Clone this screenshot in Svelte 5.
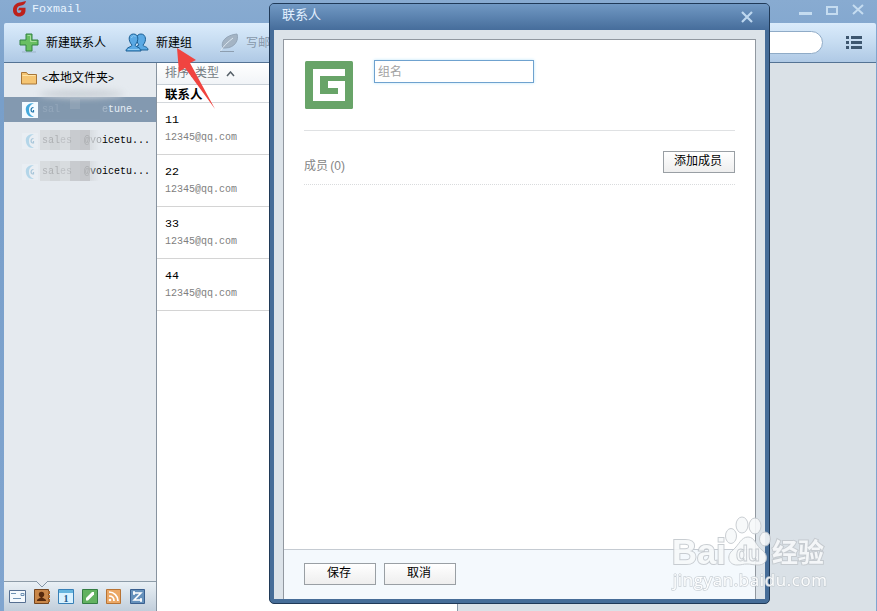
<script lang="ts">
	const accounts = [
		{ start: 'sal', mid: '       e', end: 'tune...', selected: true },
		{ start: 'sal', mid: 'es  @vo', end: 'icetu...', selected: false },
		{ start: 'sal', mid: 'es  @', end: 'voicetu...', selected: false }
	];

	const contacts = ['11', '22', '33', '44'].map((name) => ({ name, email: '12345@qq.com' }));

	let groupName = $state('');
	const members: string[] = [];
</script>

<div class="window">
	<header class="titlebar">
		<svg class="logo" width="15" height="16" viewBox="0 0 15 16">
			<path d="M14 0 9 1.200C4 1.800 1 4.600 1 9c0 4 2.600 6.500 6 6.500 4 0 6.500-2.600 6.500-6V6.800H7.200L6 9.200h3.400c-.2 1.800-1 2.800-2.400 2.800-1.500 0-2.200-1.200-2.200-3 0-3 1.600-4.400 4.500-4.600C12 4.200 13.400 2.500 14 0z" fill="#bd211b" />
		</svg>
		<span class="app-name">Foxmail</span>
		<svg class="controls" width="68" height="14" viewBox="0 0 68 14" fill="none" stroke="#c5dcf0">
			<path d="M0 10.500h13" stroke-width="3" />
			<path d="M28 4h10v7H28z" stroke-width="2" />
			<path d="M54 2l10 9M64 2l-10 9" stroke-width="2" />
		</svg>
	</header>

	<div class="toolbar">
		<svg class="plus" width="20" height="20" viewBox="0 0 20 20">
			<path d="M3 19h14" stroke="#8095a8" opacity=".5" />
			<path d="M7 1h6v6h6v5h-6v6H7v-6H1V7h6z" fill="#69bf62" stroke="#328342" />
			<path d="M8.500 2.500h3v6h6" fill="none" stroke="#a6dd9d" />
		</svg>
		<span class="tool new-contact">新建联系人</span>
		<svg class="people" width="24" height="19" viewBox="0 0 24 19" fill="#5aa9e4" stroke="#1c6095">
			<path d="M12 17v-4l2-1c-4-5-3-11 2-11s6 7 2 11c0 2 5 1 5 5z" />
			<path d="M1 18c0-4 6-4 6-6C3 8 3 1 8.500 1S14 8 10 12c0 2 6 2 6 6z" />
			<path d="M6.500 5c1-3 3-3 4-1M3 16.500h11" fill="none" stroke="#91cdf4" />
		</svg>
		<span class="tool new-group">新建组</span>
		<svg class="feather" width="20" height="20" viewBox="0 0 20 20">
			<path d="M4 15C1 9 7 2 18 1c2 6-2 14-12 14z" fill="#a4b4c4" stroke="#93a5b8" />
			<path d="M1 19c3-6 8-10 13-14" stroke="#dce7f0" fill="none" />
			<path d="M1 18.500h14" stroke="#8d9eb0" />
		</svg>
		<span class="tool disabled">写邮件</span>
		<div class="search"></div>
		<svg class="menu" width="16" height="13" viewBox="0 0 16 13" fill="#3d566f">
			<path d="M0 0h3v3H0zM5 0h11v3H5zM0 5h3v3H0zM5 5h11v3H5zM0 10h3v3H0zM5 10h11v3H5z" />
		</svg>
	</div>

	<div class="body">
		<aside class="sidebar">
			<div class="folder">
				<svg width="16" height="14" viewBox="0 0 16 14">
					<path d="M.5 13V1.500h5l1.500 2h8.500V13z" fill="#f5c573" stroke="#a87638" />
					<path d="M1.500 4.500h13" stroke="#ffe5a9" />
				</svg>
				<span><i>&lt;</i>本地文件夹<i>&gt;</i></span>
			</div>
			<div class="accounts">
				{#each accounts as account}
					<div class="account" class:selected={account.selected}>
						<svg width="16" height="16" viewBox="0 0 16 16">
							<path d="M0 0h16v16H0z" fill="#f3faff" />
							<path d="M12 1C6 1 3 4 4 9s4 6 8 6C8 13 7 11 7 8s1-5 5-7z" fill="#45a9dc" />
							<path d="M11.500 5.500C8 6 8.500 10 11.500 10V8" fill="none" stroke="#2679ad" stroke-width="1.200" />
						</svg>
						<span class="address"><span class="faint">{account.start}</span><span class="masked">{account.mid}</span>{account.end}</span>
						<div class="mosaic"><b></b><b></b><b></b><b></b><b></b><b></b></div>
					</div>
				{/each}
				<div class="smudge"></div>
			</div>
			<nav class="modules">
				<svg class="notch" width="14" height="7" viewBox="0 0 14 7">
					<path d="M1 0l6 6 6-6" fill="#e5eaef" stroke="#8496a6" />
				</svg>
				<svg width="17" height="16" viewBox="0 0 17 16" fill="none" stroke="#566f91">
					<path d="M.5 1.500h16v12H.5z" fill="#f5f9fd" />
					<path d="M2 4.500h5M12 4.500h3v2h-3zM4 9.500h8" stroke="#6e91b3" />
				</svg>
				<svg width="16" height="16" viewBox="0 0 16 16">
					<path d="M.5.5h14v14H.5z" fill="#c98749" stroke="#744620" />
					<path d="M15 2v12" stroke="#a9682e" stroke-width="2" stroke-dasharray="3 1" />
					<circle cx="7.500" cy="5.500" r="2.700" fill="#55290d" />
					<path d="M3 12c0-3 3-2 4-4h1c1 2 4 1 4 4z" fill="#55290d" />
				</svg>
				<svg width="16" height="16" viewBox="0 0 16 16">
					<path d="M.5.5h15v14H.5z" fill="#d9f2ff" stroke="#3780b7" />
					<path d="M1 1h14v3H1z" fill="#65b5de" />
					<text x="5.500" y="12.500">1</text>
				</svg>
				<svg width="16" height="16" viewBox="0 0 16 16">
					<path d="M.5.5h15v14H.5z" fill="#62b260" stroke="#347d42" />
					<path d="M4 11.500V9l6-6h2v2.500l-6 6z" fill="#fff" />
				</svg>
				<svg width="16" height="16" viewBox="0 0 16 16">
					<path d="M.5.5h14v14H.5z" fill="#eba866" stroke="#b87333" />
					<path d="M3 7c3 0 5 2 5 5M3 3c5 0 9 4 9 9" fill="none" stroke="#fff" stroke-width="1.700" />
					<circle cx="4" cy="11" r="1.300" fill="#fff" />
				</svg>
				<svg width="16" height="16" viewBox="0 0 16 16">
					<path d="M.5.5h14v14H.5z" fill="#6591bc" stroke="#395f8f" />
					<path d="M3 4h8l-7 7h8M4 2v4M11 9v4" fill="none" stroke="#fff" stroke-width="1.500" />
				</svg>
			</nav>
		</aside>

		<section class="list">
			<div class="sort">
				<span>排序<i>:</i>类型</span>
				<svg width="9" height="6" viewBox="0 0 9 6"><path d="M1 5l3.500-4L8 5" fill="none" stroke="#566068" stroke-width="1.500" /></svg>
			</div>
			<div class="group">联系人</div>
			{#each contacts as contact}
				<div class="contact">
					<div class="name">{contact.name}</div>
					<div class="email">{contact.email}</div>
				</div>
			{/each}
		</section>
		<section class="detail"></section>
	</div>

	<div class="dialog">
		<div class="dialog-title">
			<span>联系人</span>
			<svg width="12" height="12" viewBox="0 0 12 12"><path d="M1 1l10 10M11 1L1 11" stroke="#bdd7ef" stroke-width="2.200" /></svg>
		</div>
		<div class="dialog-body">
			<div class="panel">
				<div class="content">
					<div class="group-head">
						<svg width="48" height="48" viewBox="0 0 48 48">
							<rect width="48" height="48" rx="1.500" fill="#68a468" />
							<path d="M8 8h32v7H15v18h18v-6H23v-7h17v20H8z" fill="#fff" />
						</svg>
						<input type="text" placeholder="组名" bind:value={groupName} />
					</div>
					<div class="members">
						<span>成员 <i>({members.length})</i></span>
						<button>添加成员</button>
					</div>
				</div>
				<div class="actions">
					<button>保存</button>
					<button>取消</button>
				</div>
			</div>
		</div>
	</div>

	<svg class="pointer" width="42" height="64" viewBox="0 0 42 64">
		<path d="M2 1l19 12-6 3 25 46L10 21l-6 4z" fill="#f04440" />
	</svg>

	<div class="watermark">
		<svg width="160" height="80" viewBox="0 0 160 80">
			<g class="mark">
				<ellipse cx="60" cy="21" rx="5.500" ry="7.500" />
				<ellipse cx="71" cy="10" rx="6" ry="8" />
				<ellipse cx="84" cy="11" rx="6" ry="8" />
				<ellipse cx="94" cy="24" rx="5.500" ry="7" />
				<path d="M77 22c-7 0-9 8-15 13-7 5-5 15 4 15 5 0 6-1 10-1s6 1 11 1c10 0 11-10 4-15-6-4-7-13-14-13z" />
				<text class="brand" x="1" y="49" textLength="54" lengthAdjust="spacingAndGlyphs">Bai</text>
				<text class="du" x="65" y="46" textLength="24" lengthAdjust="spacingAndGlyphs">du</text>
				<text class="jingyan" x="101" y="47">经验</text>
			</g>
			<text class="url" x="2" y="71" textLength="154">jingyan.baidu.com</text>
		</svg>
	</div>
</div>

<style>
	:global(body) {
		margin: 0;
		overflow: hidden;
	}

	* {
		box-sizing: border-box;
	}

	.window {
		position: relative;
		display: flex;
		flex-direction: column;
		width: 877px;
		height: 611px;
		padding: 0 1px 0 4px;
		overflow: hidden;
		background: linear-gradient(#88abd1, #789fca 100px, #81a5cf);
		font-family: "Liberation Mono", "Noto Sans CJK SC", monospace;
		font-size: 12px;
		line-height: 16px;
		color: #000;
	}

	i {
		font-style: normal;
		font-size: 10px;
	}

	.titlebar {
		display: flex;
		height: 23px;
		flex: none;
		padding: 1px 9px 0 8px;
	}

	.app-name {
		margin-left: 5px;
		font-size: 11.67px;
		color: #e8f4ff;
	}

	.controls {
		margin: 2px 0 0 auto;
	}

	.toolbar {
		display: flex;
		align-items: center;
		flex: none;
		height: 40px;
		padding: 0 14px 0 15px;
		border-bottom: 1px solid #547394;
		border-radius: 2px 2px 0 0;
		background: linear-gradient(#daebfb, #c6dcf1 50%, #afc9e5);
	}

	.tool {
		padding-top: 2px;
		white-space: nowrap;
	}

	.new-contact {
		margin: 0 19px 0 7px;
	}

	.new-group {
		margin: 0 27px 0 7px;
	}

	.disabled {
		margin-left: 7px;
		color: #8798aa;
	}

	.search {
		width: 240px;
		height: 23px;
		margin: 0 23px 0 auto;
		border: 1px solid #8fabc7;
		border-radius: 12px;
		background: #fff;
	}

	.body {
		display: flex;
		flex: 1;
		min-height: 0;
	}

	.sidebar {
		display: flex;
		flex-direction: column;
		width: 153px;
		border-right: 1px solid #87939f;
		background: #e5eaef;
	}

	.folder {
		display: flex;
		align-items: center;
		gap: 5px;
		height: 34px;
		padding: 0 0 4px 17px;
		white-space: nowrap;
	}

	.folder span {
		padding-top: 2px;
	}

	.accounts {
		position: relative;
		display: flex;
		flex-direction: column;
		gap: 6px;
		flex: 1;
	}

	.account {
		position: relative;
		display: flex;
		align-items: center;
		gap: 4px;
		height: 25px;
		padding-left: 18px;
		font-size: 10px;
		white-space: pre;
	}

	.account > svg {
		opacity: 0.3;
	}

	.account.selected {
		background: #8399b0;
		color: #e6eef5;
	}

	.account.selected > svg {
		opacity: 1;
	}

	.faint {
		opacity: 0.5;
	}

	.masked {
		opacity: 0.35;
	}

	.mosaic {
		position: absolute;
		top: 2px;
		left: 36px;
		display: flex;
		width: 60px;
		height: 20px;
		filter: blur(0.6px);
		opacity: 0.65;
	}

	.mosaic b {
		flex: 1;
		background: #d2d5d8;
	}

	.mosaic b:nth-child(2) {
		background: #c9ccce;
	}

	.mosaic b:nth-child(4) {
		background: #b9bcbf;
	}

	.mosaic b:nth-child(5) {
		background: #b4b5b8;
	}

	.mosaic b:last-child {
		background: linear-gradient(90deg, #d3d7db, transparent);
	}

	.account.selected .mosaic b {
		background: #8298ae;
	}

	.account.selected .mosaic b:nth-child(4) {
		background: linear-gradient(#96a7b8 50%, #8298ae 50%);
	}

	.smudge {
		position: absolute;
		top: -7px;
		left: 35px;
		width: 85px;
		height: 8px;
		border-radius: 50%;
		background: #cbd1d7;
		filter: blur(3px);
	}

	.modules {
		position: relative;
		display: flex;
		align-items: center;
		gap: 8px;
		height: 30px;
		padding: 0 0 0 5px;
		border-top: 1px solid #8d9ca8;
		background: linear-gradient(#e9f0f5, #c1cedb);
	}

	.modules text {
		font: bold 10px "Liberation Serif", serif;
		fill: #245a8a;
	}

	.notch {
		position: absolute;
		top: -1px;
		left: 31px;
	}

	.list {
		width: 300px;
		background: #fff;
	}

	.sort {
		display: flex;
		align-items: center;
		gap: 7px;
		height: 22px;
		padding-left: 8px;
		border-bottom: 1px solid #c9d0d7;
		background: linear-gradient(#fff, #f1f4f7);
		color: #747b82;
	}

	.sort span {
		padding-top: 2px;
	}

	.group {
		height: 18px;
		padding: 3px 8px 0;
		border-bottom: 1px solid #d4d8dc;
		font-weight: bold;
		font-size: 12.5px;
	}

	.contact {
		height: 52px;
		padding: 9px 8px 0;
		border-bottom: 1px solid #d4d4d4;
	}

	.name {
		font-size: 11.67px;
	}

	.email {
		margin-top: 2px;
		font-size: 10px;
		color: #808080;
	}

	.detail {
		flex: 1;
		border-left: 1px solid #8998a8;
		background: #dae1e7;
	}

	.dialog {
		position: absolute;
		top: 3px;
		left: 269px;
		display: flex;
		flex-direction: column;
		width: 501px;
		height: 601px;
		padding: 0 4px 4px;
		border: 1px solid #203a58;
		border-radius: 5px;
		background: #466d98;
	}

	.dialog-title {
		display: flex;
		justify-content: space-between;
		height: 26px;
		margin: 0 -4px;
		padding: 4px 16px 0 12px;
		border-radius: 4px 4px 0 0;
		background: linear-gradient(#7199c4, #466d9b);
		color: #e2f0ff;
		font-size: 13px;
	}

	.dialog-title svg {
		margin-top: 3px;
	}

	.dialog-body {
		display: flex;
		flex: 1;
		padding: 9px 9px 0;
		background: #dce3e9;
	}

	.panel {
		display: flex;
		flex-direction: column;
		flex: 1;
		border: 1px solid #9198a0;
		border-bottom: 0;
		background: #fff;
	}

	.content {
		flex: 1;
		padding: 20px 20px 0;
	}

	.group-head {
		display: flex;
		align-items: flex-start;
		gap: 21px;
		height: 71px;
		border-bottom: 1px solid #dfe1e3;
	}

	.group-head svg {
		margin: 1px 0 0 1px;
	}

	input {
		width: 160px;
		height: 23px;
		padding: 2px 3px 0;
		border: 1px solid #6fa2cf;
		outline: none;
		box-shadow: 0 0 3px #bce4fa;
		font: inherit;
	}

	input::placeholder {
		color: #a2a2a2;
		opacity: 1;
	}

	.members {
		display: flex;
		justify-content: space-between;
		height: 54px;
		padding-top: 20px;
		border-bottom: 1px dotted #d9dbdd;
		color: #858585;
	}

	.members span {
		padding-top: 7px;
		word-spacing: -4px;
		font-family: "Liberation Sans", "Noto Sans CJK SC", sans-serif;
	}

	.members i {
		font-size: 12px;
		padding-left: 3px;
	}

	button {
		width: 72px;
		height: 22px;
		padding: 0 2px 0 0;
		border: 1px solid #999fa4;
		border-radius: 0;
		background: linear-gradient(#fff, #eee);
		font: inherit;
		color: #000;
	}

	.actions {
		display: flex;
		gap: 8px;
		height: 50px;
		padding: 13px 20px 0;
		border-top: 1px solid #c5cbd2;
		background: #f4f9fd;
	}

	.pointer {
		position: absolute;
		top: 47px;
		left: 175px;
	}

	.watermark {
		position: absolute;
		top: 515px;
		left: 671px;
		opacity: 0.9;
	}

	.watermark svg {
		display: block;
	}

	.mark {
		fill: #f7f9fa;
		stroke: #c3c8cd;
		stroke-width: 1;
	}

	.brand,
	.du {
		font-family: "Liberation Sans", sans-serif;
		font-weight: bold;
	}

	.brand {
		font-size: 35px;
	}

	.du {
		font-size: 22px;
	}

	.brand,
	.jingyan {
		stroke-width: 2px;
		paint-order: stroke;
	}

	.jingyan {
		font-family: "Noto Sans CJK SC", sans-serif;
		font-size: 26px;
		font-weight: bold;
	}

	.url {
		font-family: "Open Sans", sans-serif;
		font-size: 17px;
		fill: #fff;
		stroke: #c6cdd3;
		stroke-width: 1.5px;
		paint-order: stroke;
	}
</style>
